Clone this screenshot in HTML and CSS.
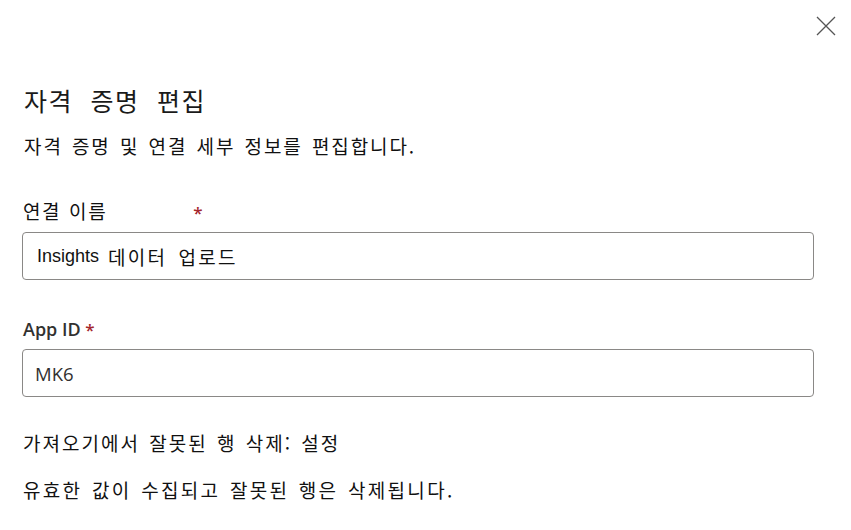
FILE: index.html
```html
<!DOCTYPE html>
<html lang="ko">
<head>
<meta charset="utf-8">
<title>자격 증명 편집</title>
<link rel="stylesheet" href="styles.css">
</head>
<body>
<div class="dialog">
  <div class="topbar">
    <button class="close" aria-label="닫기">
      <svg width="20" height="20" viewBox="0 0 20 20"><path d="M1 1 L19 19 M19 1 L1 19" stroke="#555" stroke-width="1.3" fill="none"/></svg>
    </button>
  </div>
  <div class="content">
    <h1 class="title">자격 증명 편집</h1>
    <p class="subtitle">자격 증명 및 연결 세부 정보를 편집합니다.</p>
    <div class="label ko-label">연결 이름<span class="req req-far">*</span></div>
    <div class="input input-first"><span class="latin">Insights </span>데이터 업로드</div>
    <div class="label en-label">App ID <span class="req">*</span></div>
    <div class="input input-second"><span class="mk">MK6</span></div>
    <p class="note note-first">가져오기에서 잘못된 행 삭제: 설정</p>
    <p class="note note-second">유효한 값이 수집되고 잘못된 행은 삭제됩니다.</p>
  </div>
</div>
</body>
</html>
```

FILE: styles.css
```css
html, body {
  margin: 0;
  padding: 0;
  background: #ffffff;
}
body {
  width: 851px;
  height: 530px;
  overflow: hidden;
  font-family: "Noto Sans CJK KR", "Noto Sans", sans-serif;
  color: #111111;
}
.dialog {
  display: flex;
  flex-direction: column;
}
.topbar {
  height: 52px;
  display: flex;
  justify-content: flex-end;
  align-items: flex-start;
  padding: 16px 15px 0 0;
  box-sizing: border-box;
}
.close {
  border: 0;
  background: none;
  padding: 0;
  margin: 0;
  width: 20px;
  height: 20px;
  display: block;
  cursor: pointer;
}
.close svg { display: block; }
.content {
  padding: 0 37px 0 22px;
  display: flex;
  flex-direction: column;
}
.title {
  margin: 32px 0 0 2px;
  font-size: 25px;
  font-weight: 400;
  line-height: 32px;
  letter-spacing: 1.5px;
  word-spacing: 9px;
  color: #1a1a1a;
}
.subtitle {
  margin: 17px 0 0 2px;
  font-size: 19px;
  line-height: 26px;
  letter-spacing: 1.9px;
  word-spacing: 2px;
}
.label {
  line-height: 26px;
  height: 26px;
}
.ko-label {
  margin: 39px 0 0 1px;
  font-size: 19px;
  letter-spacing: 1.6px;
  word-spacing: 1px;
}
.en-label {
  margin: 36px 0 0 1px;
  font-family: "Open Sans", "Noto Sans", sans-serif;
  font-size: 18px;
  font-weight: 600;
  color: #323130;
}
.req {
  color: #a4262c;
  font-family: "Open Sans", sans-serif;
  font-weight: 600;
  font-size: 17px;
  line-height: 1;
}
.req-far {
  margin-left: 86px;
}
.input {
  height: 48px;
  box-sizing: border-box;
  border: 1.5px solid #8a8886;
  border-radius: 4px;
  display: flex;
  align-items: center;
  white-space: pre;
}
.input-first {
  margin-top: 8px;
  padding-left: 14px;
  font-size: 19px;
  letter-spacing: 2.2px;
  word-spacing: 4px;
}
.latin {
  font-family: "Liberation Sans", Arial, sans-serif;
  font-size: 18px;
  letter-spacing: 0;
  word-spacing: 0;
  margin-right: 4px;
}
.input-second {
  margin-top: 7px;
  padding-left: 12px;
}
.mk {
  font-family: "Open Sans", "Noto Sans", sans-serif;
  font-size: 18.5px;
  color: #323130;
}
.note {
  font-size: 19px;
  line-height: 26px;
  letter-spacing: 2px;
  word-spacing: 2px;
  margin: 0 0 0 1px;
}
.note-first { margin-top: 33px; }
.note-second { margin-top: 21px; letter-spacing: 2.3px; }
```
